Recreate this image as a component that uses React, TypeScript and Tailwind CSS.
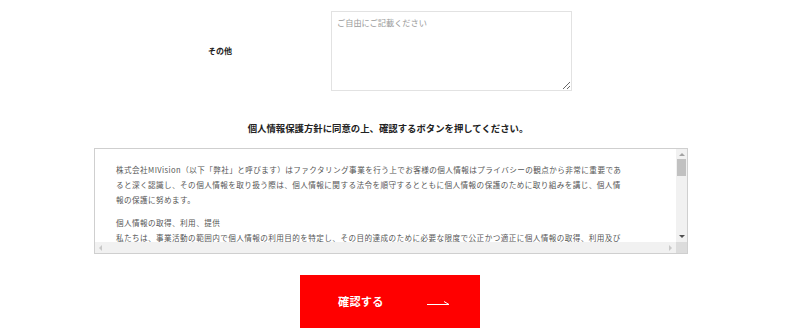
import { useState } from 'react';

const jp = { fontFamily: '"Noto Sans CJK JP", "Noto Sans", sans-serif' };

const policyLines = [
  ['株式会社MIVision（以下「弊社」と呼びます）はファクタリング事業を行う上でお客様の個人情報はプライバシーの観点から非常に重要であ', 'ると深く認識し、その個人情報を取り扱う際は、個人情報に関する法令を順守するとともに個人情報の保護のために取り組みを講じ、個人情', '報の保護に努めます。'],
  ['個人情報の取得、利用、提供', '私たちは、事業活動の範囲内で個人情報の利用目的を特定し、その目的達成のために必要な限度で公正かつ適正に個人情報の取得、利用及び'],
];

export default function App() {
  const [note, setNote] = useState('');

  return (
    <div className="h-[333px] w-[800px] overflow-hidden bg-white text-[#333]" style={jp}>
      <div className="ml-[94px] w-[594px]">
        <div className="flex pt-[11px]">
          <div className="flex w-[237px] items-center justify-center pl-[15px] text-[8px] font-bold text-[#222]">その他</div>
          <textarea
            value={note}
            onChange={(e) => setNote(e.target.value)}
            placeholder="ご自由にご記載ください"
            className="h-[80px] w-[241px] border border-[#e2e2e2] px-[5px] py-[4px] text-[8.2px] text-[#333] outline-none placeholder:text-[#9a9a9a]"
            style={jp}
          />
        </div>

        <p className="mt-[30px] pr-[6px] text-center text-[9.4px] font-bold leading-[14px] text-[#222]">個人情報保護方針に同意の上、確認するボタンを押してください。</p>

        <div className="mt-[13px] grid h-[106px] grid-cols-[1fr_11px] grid-rows-[1fr_11px] border border-[#cfcfcf]">
          <div className="overflow-hidden pl-[21px] pt-[13px] text-[7.6px] leading-[15px] tracking-[0.42px] text-[#555]">
            {policyLines.map((para, i) => (
              <div key={i} className={i > 0 ? 'mt-[8px]' : ''}>
                {para.map((line) => (
                  <div key={line} className="whitespace-nowrap">{line}</div>
                ))}
              </div>
            ))}
          </div>
          <div className="flex flex-col items-center bg-[#f1f1f1]">
            <span className="mt-[4px] h-0 w-0 border-x-[3px] border-b-[3px] border-x-transparent border-b-[#a3a3a3]" />
            <span className="mt-[3px] h-[17px] w-[9px] bg-[#c1c1c1]" />
            <span className="mt-auto mb-[4px] h-0 w-0 border-x-[3px] border-t-[3px] border-x-transparent border-t-[#505050]" />
          </div>
          <div className="flex items-center justify-between bg-[#f1f1f1] px-[4px]">
            <span className="h-0 w-0 border-y-[3px] border-r-[3px] border-y-transparent border-r-[#c8c8c8]" />
            <span className="h-0 w-0 border-y-[3px] border-l-[3px] border-y-transparent border-l-[#c8c8c8]" />
          </div>
          <div className="bg-[#dcdcdc]" />
        </div>

        <div className="mt-[21px] flex justify-center pr-[2px]">
          <button className="flex h-[53px] w-[180px] items-center bg-[#ff0000] pl-[38px] text-white">
            <span className="text-[11.2px] font-bold tracking-[0.2px]">確認する</span>
            <svg className="ml-[43px]" width="23" height="8" viewBox="0 0 23 8" fill="none" stroke="white" strokeWidth="1">
              <path d="M0 6.5H22L17 3.5" />
            </svg>
          </button>
        </div>
      </div>
    </div>
  );
}
